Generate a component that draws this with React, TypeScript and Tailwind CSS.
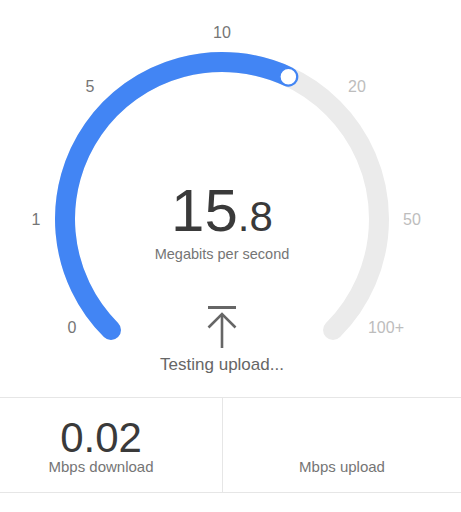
import React from 'react';

const CX = 222;
const CY = 219;
const R = 157;

function pt(deg: number) {
  const a = (deg * Math.PI) / 180;
  return { x: CX + R * Math.sin(a), y: CY - R * Math.cos(a) };
}

const labels = [
  { t: '0', x: 72, y: 327, on: true },
  { t: '1', x: 36, y: 219, on: true },
  { t: '5', x: 90, y: 86, on: true },
  { t: '10', x: 222, y: 32, on: true },
  { t: '20', x: 357, y: 86, on: false },
  { t: '50', x: 412, y: 219, on: false },
  { t: '100+', x: 386, y: 327, on: false },
];

function Gauge({ angle }: { angle: number }) {
  const s = pt(-135);
  const e = pt(135);
  const k = pt(angle);
  const large = angle + 135 > 180 ? 1 : 0;
  return (
    <svg className="absolute inset-0" width="461" height="397" viewBox="0 0 461 397">
      <path
        d={`M ${s.x} ${s.y} A ${R} ${R} 0 1 1 ${e.x} ${e.y}`}
        fill="none"
        stroke="#ebebeb"
        strokeWidth="20"
        strokeLinecap="round"
      />
      <path
        d={`M ${s.x} ${s.y} A ${R} ${R} 0 ${large} 1 ${k.x} ${k.y}`}
        fill="none"
        stroke="#4285f4"
        strokeWidth="20"
        strokeLinecap="round"
      />
      <circle cx={k.x} cy={k.y} r="8.5" fill="#fff" stroke="#4285f4" strokeWidth="1.5" />
      {labels.map((l) => (
        <text
          key={l.t}
          x={l.x}
          y={l.y}
          textAnchor="middle"
          dominantBaseline="central"
          fontSize="16"
          fontFamily="'Liberation Sans', Arial, sans-serif"
          fill={l.on ? '#757575' : '#bdbdbd'}
        >
          {l.t}
        </text>
      ))}
    </svg>
  );
}

function UploadIcon() {
  return (
    <svg width="30" height="42" viewBox="0 0 30 42" fill="none" stroke="#666" strokeWidth="2.6">
      <line x1="1" y1="1.5" x2="29" y2="1.5" strokeWidth="3" />
      <line x1="15" y1="8" x2="15" y2="42" />
      <polyline points="1.5,21.5 15,8 28.5,21.5" />
    </svg>
  );
}

export default function App() {
  return (
    <div className="w-[461px] h-[512px] bg-white font-['Liberation_Sans',Arial,sans-serif] overflow-hidden">
      <div className="relative h-[397px]">
        <Gauge angle={25} />
        <div className="relative flex flex-col items-center pt-[181px] pr-[17px]">
          <div className="text-[60px] leading-none text-[#3a3a3a]">
            15<span className="text-[42px] leading-none">.8</span>
          </div>
          <div className="mt-[6px] text-[14.5px] leading-none text-[#757575]">Megabits per second</div>
          <div className="mt-[44px] h-[42px]">
            <UploadIcon />
          </div>
          <div className="mt-[8px] text-[17px] leading-none text-[#666]">Testing upload...</div>
        </div>
      </div>

      <div className="grid grid-cols-[222px_1fr] h-[96px] border-y border-[#e6e6e6]">
        <div className="flex flex-col items-center pt-[20px] pr-5">
          <div className="text-[42px] leading-[40px] text-[#3a3a3a]">0.02</div>
          <div className="mt-px text-[15px] leading-none text-[#757575]">Mbps download</div>
        </div>
        <div className="flex flex-col items-center pt-[20px] border-l border-[#e6e6e6]">
          <div className="h-[40px]" />
          <div className="mt-px text-[15px] leading-none text-[#757575]">Mbps upload</div>
        </div>
      </div>
    </div>
  );
}
